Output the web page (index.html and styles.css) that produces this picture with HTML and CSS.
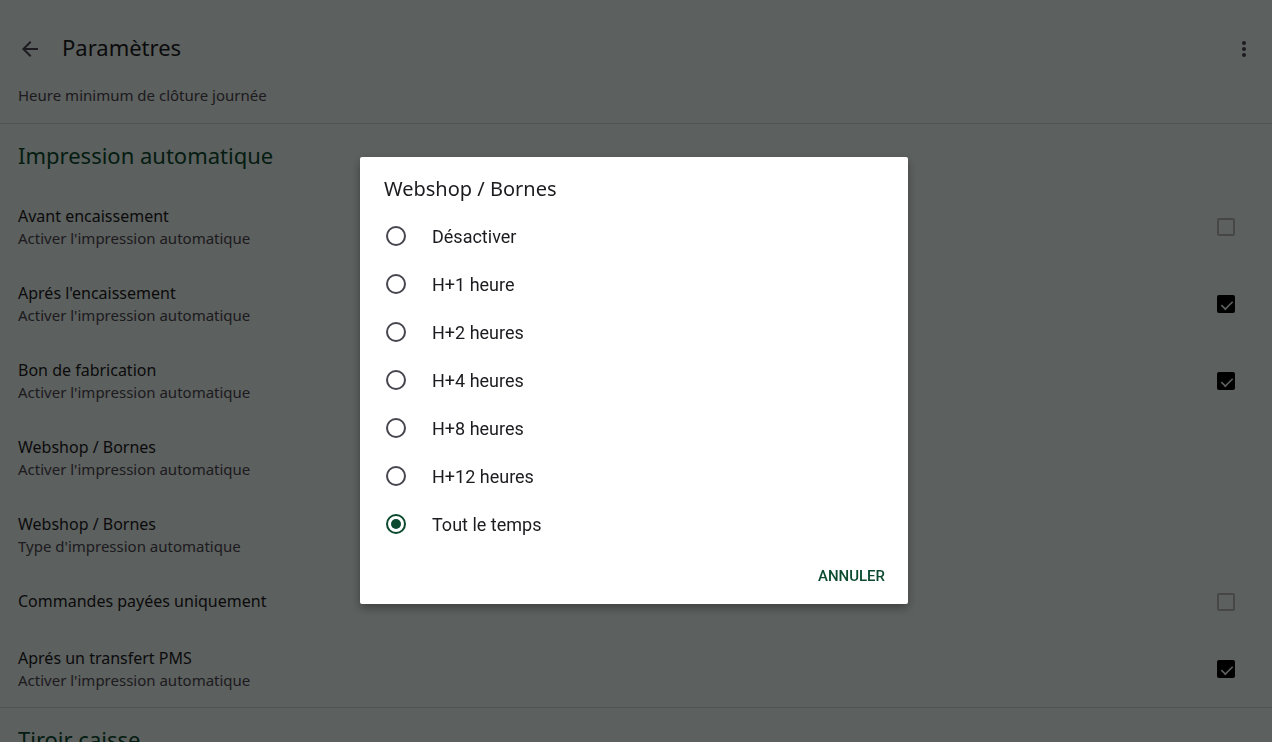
FILE: index.html
```
<!DOCTYPE html>
<html lang="fr">
<head>
    <meta charset="UTF-8">
    <meta name="viewport" content="width=device-width, initial-scale=1.0">
    <title>Paramètres</title>
    <link rel="stylesheet" href="styles.css">
</head>
<body>
    <div class="page">
        <header class="toolbar">
            <button type="button" class="icon-btn" aria-label="Retour">
                <svg width="24" height="24" viewBox="0 0 24 24"><path fill="currentColor" d="M20 11H7.83l5.59-5.59L12 4l-8 8 8 8 1.41-1.41L7.83 13H20v-2z"/></svg>
            </button>
            <h1>Paramètres</h1>
            <button type="button" class="icon-btn menu-btn" aria-label="Plus d'options">
                <svg width="24" height="24" viewBox="0 0 24 24"><path fill="currentColor" d="M12 8c1.1 0 2-.9 2-2s-.9-2-2-2-2 .9-2 2 .9 2 2 2zm0 2c-1.1 0-2 .9-2 2s.9 2 2 2 2-.9 2-2-.9-2-2-2zm0 6c-1.1 0-2 .9-2 2s.9 2 2 2 2-.9 2-2-.9-2-2-2z"/></svg>
            </button>
        </header>

        <main>
            <section class="group group-end">
                <p class="summary">Heure minimum de clôture journée</p>
            </section>

            <section class="group">
                <h2>Impression automatique</h2>
                <div class="row">
                    <label for="avant"><span class="name">Avant encaissement</span><span class="summary">Activer l'impression automatique</span></label>
                    <input type="checkbox" id="avant">
                </div>
                <div class="row">
                    <label for="apres"><span class="name">Aprés l'encaissement</span><span class="summary">Activer l'impression automatique</span></label>
                    <input type="checkbox" id="apres" checked>
                </div>
                <div class="row">
                    <label for="bon"><span class="name">Bon de fabrication</span><span class="summary">Activer l'impression automatique</span></label>
                    <input type="checkbox" id="bon" checked>
                </div>
                <div class="row">
                    <div><span class="name">Webshop / Bornes</span><span class="summary">Activer l'impression automatique</span></div>
                </div>
                <div class="row">
                    <div><span class="name">Webshop / Bornes</span><span class="summary">Type d'impression automatique</span></div>
                </div>
                <div class="row">
                    <label for="payees"><span class="name">Commandes payées uniquement</span></label>
                    <input type="checkbox" id="payees">
                </div>
                <div class="row">
                    <label for="pms"><span class="name">Aprés un transfert PMS</span><span class="summary">Activer l'impression automatique</span></label>
                    <input type="checkbox" id="pms" checked>
                </div>
            </section>

            <section class="group">
                <h2>Tiroir caisse</h2>
            </section>
        </main>
    </div>

    <!-- Dialog -->
    <div class="overlay">
        <form class="dialog" role="dialog" aria-labelledby="dialog-title">
            <h3 id="dialog-title">Webshop / Bornes</h3>
            <label class="option"><input type="radio" name="delai">Désactiver</label>
            <label class="option"><input type="radio" name="delai">H+1 heure</label>
            <label class="option"><input type="radio" name="delai">H+2 heures</label>
            <label class="option"><input type="radio" name="delai">H+4 heures</label>
            <label class="option"><input type="radio" name="delai">H+8 heures</label>
            <label class="option"><input type="radio" name="delai">H+12 heures</label>
            <label class="option"><input type="radio" name="delai" checked>Tout le temps</label>
            <div class="actions">
                <button type="button" class="cancel">ANNULER</button>
            </div>
        </form>
    </div>
</body>
</html>
```
FILE: styles.css
```
* {
    box-sizing: border-box;
}

body {
    margin: 0;
    background-color: #e6f0eb;
    color: #1c1b1f;
    font-family: "Noto Sans", sans-serif;
}

h1, h2, h3, p {
    margin: 0;
    font-weight: 400;
}

.page {
    height: 100vh;
    overflow: hidden;
}

.toolbar {
    display: flex;
    align-items: center;
    padding: 25px 16px 0 18px;
}

.toolbar h1 {
    flex: 1;
    margin-left: 20px;
    padding-bottom: 4px;
    font-size: 22px;
    line-height: 44px;
}

.icon-btn {
    display: flex;
    padding: 0;
    border: none;
    background: none;
    color: #49454f;
    cursor: pointer;
}

.group {
    border-bottom: 1px solid #c6cfcb;
}

.group-end {
    padding: 13px 18px 17px;
}

.group h2 {
    padding: 11px 18px 13px;
    color: #0b4a2f;
    font-size: 22px;
    line-height: 40px;
}

.row {
    display: flex;
    align-items: center;
    justify-content: space-between;
    padding: 16px 37px 16px 18px;
}

.name {
    display: block;
    font-size: 16px;
    line-height: 25px;
}

.summary {
    display: block;
    padding-bottom: 2px;
    color: #49454f;
    font-size: 15px;
    line-height: 18px;
}

.row input {
    appearance: none;
    width: 18px;
    height: 18px;
    margin: 0;
    border: 2px solid #aeb0b0;
    border-radius: 2px;
}

.row input:checked {
    border-color: #000;
    background: #000;
}

.row input:checked::before {
    content: "";
    display: block;
    width: 12px;
    height: 6px;
    margin: 3px 0 0 1px;
    border-left: 2px solid #e6f0eb;
    border-bottom: 2px solid #e6f0eb;
    transform: rotate(-45deg) scale(0.8);
}

.overlay {
    position: fixed;
    inset: 0;
    display: flex;
    align-items: center;
    justify-content: center;
    padding: 19px 4px 0 0;
    background: rgba(0, 0, 0, 0.6);
}

.dialog {
    width: 548px;
    max-width: 90%;
    border-radius: 2px;
    background: #fff;
    box-shadow: 0 4px 10px rgba(0, 0, 0, 0.35);
}

.dialog h3 {
    padding: 16px 24px 7px;
    font-size: 20px;
    line-height: 32px;
}

.option {
    display: flex;
    align-items: center;
    gap: 26px;
    height: 48px;
    padding: 0 26px;
    font-family: Roboto, sans-serif;
    font-size: 18px;
}

.option input {
    appearance: none;
    width: 20px;
    height: 20px;
    margin: 0;
    border: 2px solid #49454f;
    border-radius: 50%;
}

.option input:checked {
    padding: 3px;
    border-color: #0b4a2f;
}

.option input:checked::before {
    content: "";
    display: block;
    width: 10px;
    height: 10px;
    border-radius: 50%;
    background: #0b4a2f;
}

.actions {
    display: flex;
    justify-content: flex-end;
    padding: 8px 11px;
}

.cancel {
    padding: 0 12px;
    border: none;
    background: none;
    color: #0b4a2f;
    font-family: Roboto, sans-serif;
    font-size: 15px;
    font-weight: 500;
    line-height: 40px;
    cursor: pointer;
}
```
